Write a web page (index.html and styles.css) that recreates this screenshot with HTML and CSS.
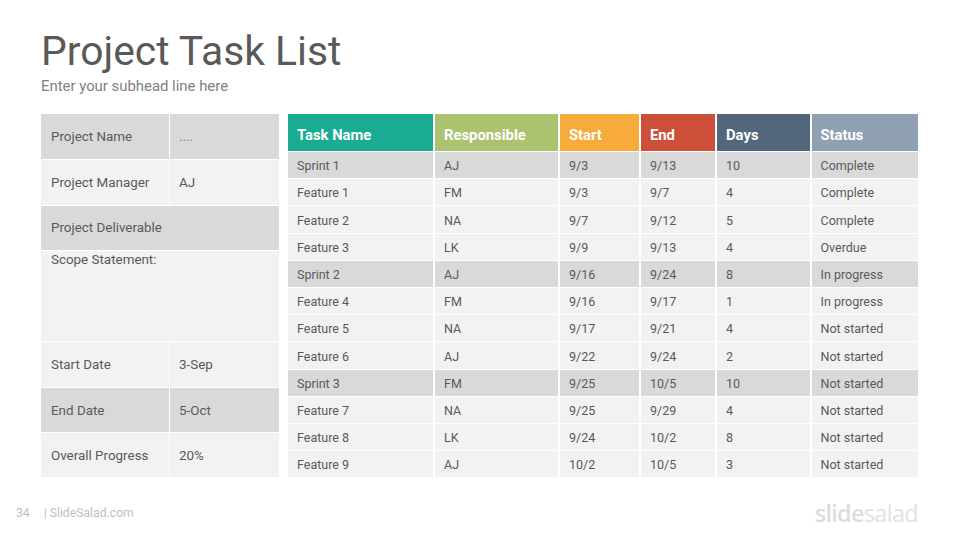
FILE: index.html
```html
<!DOCTYPE html>
<html lang="en">
<head>
<meta charset="utf-8">
<title>Project Task List</title>
<link rel="stylesheet" href="styles.css">
</head>
<body>
<div class="slide">
  <header class="head">
    <h1 class="title">Project Task List</h1>
    <p class="sub">Enter your subhead line here</p>
  </header>
  <main class="content">
    <section class="info">
      <div class="cell dark h45">Project Name</div><div class="cell val dark h45 dots">....</div>
      <div class="cell light h45">Project Manager</div><div class="cell val light h45">AJ</div>
      <div class="cell dark wide h44 up">Project Deliverable</div>
      <div class="cell light wide scope">Scope Statement:</div>
      <div class="cell light h45">Start Date</div><div class="cell val light h45">3-Sep</div>
      <div class="cell dark h44">End Date</div><div class="cell val dark h44">5-Oct</div>
      <div class="cell light h44">Overall Progress</div><div class="cell val light h44">20%</div>
    </section>
    <section class="tasks">
      <div class="th teal">Task Name</div><div class="th green">Responsible</div><div class="th orange">Start</div><div class="th red">End</div><div class="th slate">Days</div><div class="th steel">Status</div>
      <div class="td dark">Sprint 1</div><div class="td dark">AJ</div><div class="td dark">9/3</div><div class="td dark">9/13</div><div class="td dark">10</div><div class="td dark">Complete</div>
      <div class="td light">Feature 1</div><div class="td light">FM</div><div class="td light">9/3</div><div class="td light">9/7</div><div class="td light">4</div><div class="td light">Complete</div>
      <div class="td light">Feature 2</div><div class="td light">NA</div><div class="td light">9/7</div><div class="td light">9/12</div><div class="td light">5</div><div class="td light">Complete</div>
      <div class="td light">Feature 3</div><div class="td light">LK</div><div class="td light">9/9</div><div class="td light">9/13</div><div class="td light">4</div><div class="td light">Overdue</div>
      <div class="td dark">Sprint 2</div><div class="td dark">AJ</div><div class="td dark">9/16</div><div class="td dark">9/24</div><div class="td dark">8</div><div class="td dark">In progress</div>
      <div class="td light">Feature 4</div><div class="td light">FM</div><div class="td light">9/16</div><div class="td light">9/17</div><div class="td light">1</div><div class="td light">In progress</div>
      <div class="td light">Feature 5</div><div class="td light">NA</div><div class="td light">9/17</div><div class="td light">9/21</div><div class="td light">4</div><div class="td light">Not started</div>
      <div class="td light">Feature 6</div><div class="td light">AJ</div><div class="td light">9/22</div><div class="td light">9/24</div><div class="td light">2</div><div class="td light">Not started</div>
      <div class="td dark">Sprint 3</div><div class="td dark">FM</div><div class="td dark">9/25</div><div class="td dark">10/5</div><div class="td dark">10</div><div class="td dark">Not started</div>
      <div class="td light">Feature 7</div><div class="td light">NA</div><div class="td light">9/25</div><div class="td light">9/29</div><div class="td light">4</div><div class="td light">Not started</div>
      <div class="td light">Feature 8</div><div class="td light">LK</div><div class="td light">9/24</div><div class="td light">10/2</div><div class="td light">8</div><div class="td light">Not started</div>
      <div class="td light">Feature 9</div><div class="td light">AJ</div><div class="td light">10/2</div><div class="td light">10/5</div><div class="td light">3</div><div class="td light">Not started</div>
    </section>
  </main>
  <footer class="foot">
    <div class="page"><span class="num">34</span><span>| SlideSalad.com</span></div>
    <div class="logo"><b>slide</b>salad</div>
  </footer>
</div>
</body>
</html>
```

FILE: styles.css
```css
* { box-sizing: border-box; margin: 0; padding: 0; }
html, body { width: 960px; height: 540px; overflow: hidden; background: #fff; }
body { font-family: Roboto, "Liberation Sans", sans-serif; color: #595959; }
.slide { width: 960px; height: 540px; padding: 27px 42px 0 41px; display: flex; flex-direction: column; }
.head { height: 87px; }
.title { font-size: 40.8px; line-height: 48px; font-weight: 400; color: #595959; }
.sub { font-size: 14.9px; line-height: 20px; margin-top: 1px; color: #7f7f7f; }
.content { display: flex; gap: 9px; }
.info { width: 238px; display: grid; grid-template-columns: 128px 109px; gap: 1px; align-content: start; }
.cell { font-size: 13.4px; padding-left: 10px; display: flex; align-items: center; }
.val { padding-left: 9px; }
.h45 { height: 45px; padding-bottom: 1px; }
.h44 { height: 44px; }
.up { padding-bottom: 2px; }
.wide { grid-column: 1 / -1; }
.scope { height: 90px; align-items: flex-start; padding-top: 1px; line-height: 16px; }
.dots { color: #7f7f7f; }
.dark { background: #d9d9d9; }
.light { background: #f2f2f2; }
.tasks { width: 630px; display: grid; grid-template-columns: 145px 123px 79px 74px 92.5px 106.5px; grid-auto-rows: 26.2px; grid-template-rows: 37px; column-gap: 2px; row-gap: 1px; align-content: start; }
.th { color: #fff; font-size: 14.8px; font-weight: 700; padding: 4px 0 0 9px; display: flex; align-items: center; }
.td { font-size: 12.5px; padding: 1.4px 0 0 9px; display: flex; align-items: center; }
.teal { background: #1aab92; }
.green { background: #abc270; }
.orange { background: #f6ab3a; }
.red { background: #cd4f3a; }
.slate { background: #52667c; }
.steel { background: #8fa0b3; }
.foot { display: flex; justify-content: space-between; align-items: center; margin-top: 21px; margin-left: -25px; height: 30px; }
.page { font-size: 12.2px; color: #bfbfbf; display: flex; gap: 14px; }
.logo { font-family: "Open Sans", sans-serif; font-size: 23.5px; letter-spacing: -0.7px; color: #e2e2e2; font-weight: 400; }
.logo b { font-weight: 600; color: #dcdcdc; }
```
